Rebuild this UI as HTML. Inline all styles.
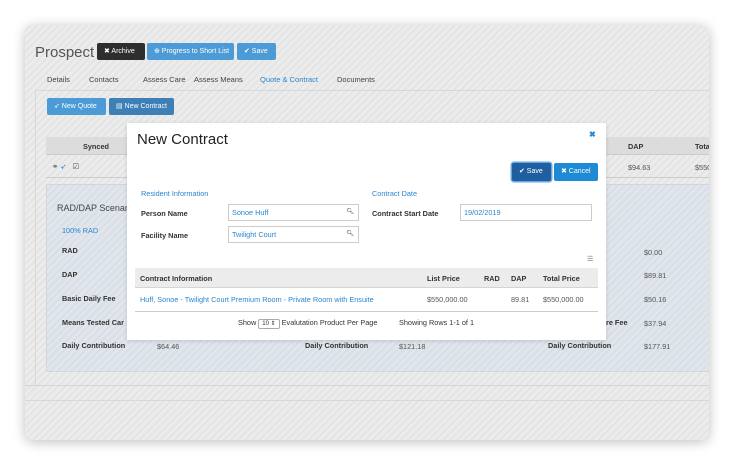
<!DOCTYPE html>
<html><head><meta charset="utf-8"><style>
*{box-sizing:border-box;margin:0;padding:0}
body{width:734px;height:465px;background:#fff;font-family:"Liberation Sans",sans-serif;position:relative;overflow:hidden;color:#333}
.a{position:absolute;white-space:nowrap}
.card{position:absolute;left:25px;top:25px;width:684px;height:415px;border-radius:8px;box-shadow:0 2px 12px rgba(0,0,0,.25);overflow:hidden;background:#ebebeb repeating-linear-gradient(135deg,#ececec 0 3px,#e4e4e4 3px 5px)}
.btn{position:absolute;height:17px;border-radius:2px;color:#fff;font-size:7px;line-height:17px;padding-left:7px}
.tab{position:absolute;top:75px;font-size:7.5px;color:#444}
.b{font-weight:bold}
.lbl{font-size:7.3px;font-weight:bold;color:#333}
.v{font-size:7.3px;color:#555}
.blue{color:#2a86d0}
.inp{position:absolute;height:17px;border:1px solid #ccc;background:#fff;font-size:7.3px;color:#2a86d0;line-height:15px;padding-left:3px}
.inp i{position:absolute;right:4px;top:0;font-style:normal;color:#335;font-size:6px}
</style></head><body>
<div class="card">
 <div class="a" style="left:10px;top:19px;font-size:15px;color:#555">Prospect</div>
 <div class="btn" style="left:72px;top:18px;width:48px;background:#2e2e2e">✖ Archive</div>
 <div class="btn" style="left:122px;top:18px;width:87px;background:#4c9bd6">⊕ Progress to Short List</div>
 <div class="btn" style="left:212px;top:18px;width:39px;background:#4c9bd6">✔ Save</div>
 <div class="tab" style="left:22px;top:50px">Details</div>
 <div class="tab" style="left:64px;top:50px">Contacts</div>
 <div class="tab" style="left:118px;top:50px">Assess Care</div>
 <div class="tab" style="left:169px;top:50px">Assess Means</div>
 <div class="tab" style="left:235px;top:50px;color:#2a86d0">Quote &amp; Contract</div>
 <div class="tab" style="left:312px;top:50px">Documents</div>
 <div class="a" style="left:10px;top:65px;width:680px;height:296px;border:1px solid #d8d8d8;border-right:none"></div>
 <div class="btn" style="left:22px;top:73px;width:59px;background:#4c9bd6">➶ New Quote</div>
 <div class="btn" style="left:84px;top:73px;width:65px;background:#3e7fb6">▤ New Contract</div>
 <div class="a" style="left:21px;top:112px;width:670px;height:18px;background:#dcdcdc;border-bottom:1px solid #ccc"></div>
 <div class="a lbl" style="left:58px;top:117px">Synced</div>
 <div class="a lbl" style="left:603px;top:117px">DAP</div>
 <div class="a lbl" style="left:670px;top:117px">Tota</div>
 <div class="a" style="left:21px;top:130px;width:670px;height:23px;border-bottom:1px solid #ccc"></div>
 <div class="a v" style="left:27px;top:137px">⚭ <span class="blue">➶</span> &nbsp; ☑</div>
 <div class="a v" style="left:603px;top:138px">$94.63</div>
 <div class="a v" style="left:670px;top:138px">$550</div>
 <div class="a" style="left:21px;top:159px;width:670px;height:188px;border:1px solid #cfd6dc;background:#dfe5eb repeating-linear-gradient(135deg,#e0e6ec 0 3px,#d8dfe6 3px 5px)"></div>
 <div class="a" style="left:32px;top:178px;font-size:9px;color:#444">RAD/DAP Scenario</div>
 <div class="a blue" style="left:37px;top:201px;font-size:7.3px">100% RAD</div>
 <div class="a lbl" style="left:37px;top:221px">RAD</div>
 <div class="a lbl" style="left:37px;top:245px">DAP</div>
 <div class="a lbl" style="left:37px;top:269px">Basic Daily Fee</div>
 <div class="a lbl" style="left:37px;top:293px">Means Tested Car</div>
 <div class="a lbl" style="left:37px;top:316px">Daily Contribution</div>
 <div class="a v" style="left:132px;top:317px">$64.46</div>
 <div class="a lbl" style="left:280px;top:316px">Daily Contribution</div>
 <div class="a v" style="left:374px;top:317px">$121.18</div>
 <div class="a lbl" style="left:523px;top:316px">Daily Contribution</div>
 <div class="a lbl" style="left:581px;top:293px">re Fee</div>
 <div class="a v" style="left:619px;top:223px">$0.00</div>
 <div class="a v" style="left:619px;top:246px">$89.81</div>
 <div class="a v" style="left:619px;top:270px">$50.16</div>
 <div class="a v" style="left:619px;top:294px">$37.94</div>
 <div class="a v" style="left:619px;top:317px">$177.91</div>
 <div class="a" style="left:0;top:360px;width:684px;height:1px;background:#d4d4d4"></div>
 <div class="a" style="left:0;top:375px;width:684px;height:1px;background:#d8d8d8"></div>
</div>
<div class="a" style="left:127px;top:123px;width:479px;height:217px;background:#fff;box-shadow:0 1px 4px rgba(0,0,0,.15)"></div>
<div class="a" style="left:137px;top:131px;font-size:15px;color:#222">New Contract</div>
<div class="a blue" style="left:589px;top:130px;font-size:8px;font-weight:bold">✖</div>
<div class="btn" style="left:512px;top:163px;width:39px;height:18px;background:#1f5f9f;box-shadow:0 0 0 1.5px #6aa7e0">✔ Save</div>
<div class="btn" style="left:554px;top:163px;width:44px;height:18px;background:#1e8ad6">✖ Cancel</div>
<div class="a blue" style="left:141px;top:189px;font-size:7.3px">Resident Information</div>
<div class="a blue" style="left:372px;top:189px;font-size:7.3px">Contract Date</div>
<div class="a lbl" style="left:141px;top:209px">Person Name</div>
<div class="inp" style="left:228px;top:204px;width:131px">Sonoe Huff<i>🔍︎</i></div>
<div class="a lbl" style="left:372px;top:209px">Contract Start Date</div>
<div class="inp" style="left:460px;top:204px;width:132px">19/02/2019</div>
<div class="a lbl" style="left:141px;top:231px">Facility Name</div>
<div class="inp" style="left:228px;top:226px;width:131px">Twilight Court<i>🔍︎</i></div>
<div class="a" style="left:587px;top:255px;font-size:7px;color:#777">☰</div>
<div class="a" style="left:135px;top:268px;width:463px;height:20px;background:#ececec;border-bottom:1px solid #d5d5d5"></div>
<div class="a lbl" style="left:140px;top:274px">Contract Information</div>
<div class="a lbl" style="left:427px;top:274px">List Price</div>
<div class="a lbl" style="left:484px;top:274px">RAD</div>
<div class="a lbl" style="left:511px;top:274px">DAP</div>
<div class="a lbl" style="left:543px;top:274px">Total Price</div>
<div class="a" style="left:135px;top:288px;width:463px;height:24px;border-bottom:1px solid #ccc"></div>
<div class="a blue" style="left:140px;top:295px;font-size:7.3px">Huff, Sonoe - Twilight Court Premium Room - Private Room with Ensuite</div>
<div class="a v" style="left:427px;top:295px">$550,000.00</div>
<div class="a v" style="left:511px;top:295px">89.81</div>
<div class="a v" style="left:543px;top:295px">$550,000.00</div>
<div class="a v" style="left:238px;top:318px;color:#333">Show <span style="display:inline-block;border:1px solid #aaa;border-radius:2px;padding:0 3px;font-size:6px;line-height:8px">10 ⇕</span> Evalutation Product Per Page</div>
<div class="a v" style="left:399px;top:318px;color:#333">Showing Rows 1-1 of 1</div>
</body></html>
